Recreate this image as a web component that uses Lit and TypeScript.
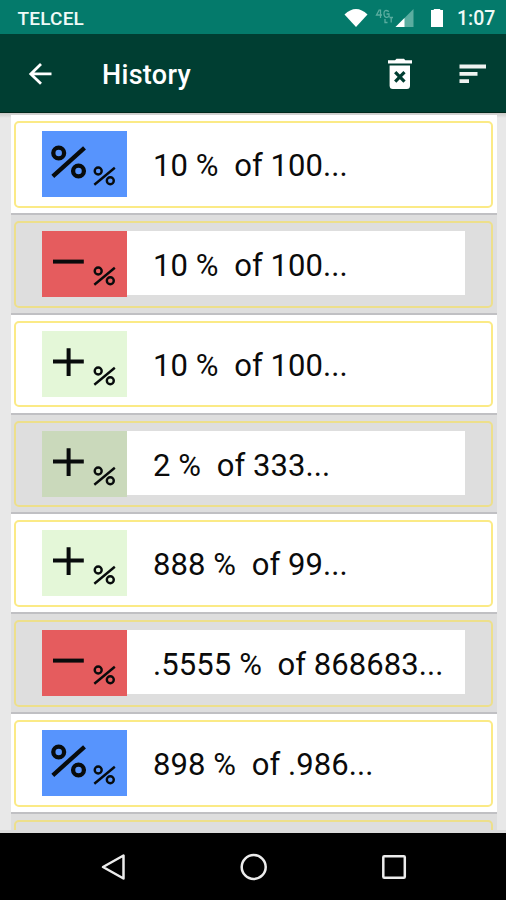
import { LitElement, html, svg, css } from "lit";
import { customElement, property } from "lit/decorators.js";
import { classMap } from "lit/directives/class-map.js";

type Kind = "percent" | "minus" | "plus";
interface Entry { kind: Kind; text: string; }

const ENTRIES: Entry[] = [
  { kind: "percent", text: "10 %  of 100..." },
  { kind: "minus", text: "10 %  of 100..." },
  { kind: "plus", text: "10 %  of 100..." },
  { kind: "plus", text: "2 %  of 333..." },
  { kind: "plus", text: "888 %  of 99..." },
  { kind: "minus", text: ".5555 %  of 868683..." },
  { kind: "percent", text: "898 %  of .986..." },
  { kind: "plus", text: "" },
];

@customElement("operation-tile")
class OperationTile extends LitElement {
  @property() kind: Kind = "percent";
  @property({ type: Boolean }) shaded = false;

  static styles = css`
    :host { display: block; flex: none; width: 85px; height: 66px; }
    .tile { display: block; width: 85px; height: 66px; fill: none; stroke: #080b0c; }
    .percent { background: #5794fd; }
    .minus { background: #e55c5e; }
    .plus { background: #e4f7d8; }
    .plus.shaded { background: #cad9bb; }
  `;

  private symbol() {
    if (this.kind === "percent") {
      return svg`<g stroke-width="4.3">
        <circle cx="16.7" cy="22" r="5.4"></circle>
        <circle cx="36.5" cy="40" r="5.4"></circle>
        <path d="M10.8 45.3 42.5 16.8"></path></g>`;
    }
    return svg`<path stroke-width="4" d=${this.kind === "plus"
      ? "M11 30.6H41.8M26.6 17.2V45" : "M11 30.6H41.8"}></path>`;
  }

  render() {
    return html`<svg viewBox="0 0 85 66" class=${classMap({ tile: true, [this.kind]: true, shaded: this.shaded })}>
      ${this.symbol()}
      <g stroke-width="2.4">
        <circle cx="56.2" cy="40" r="3.5"></circle>
        <circle cx="68.3" cy="49.7" r="3.5"></circle>
        <path d="M52.3 53.7 72.8 36.8"></path>
      </g>
    </svg>`;
  }
}

@customElement("app-root")
class AppRoot extends LitElement {
  static styles = css`
    :host {
      display: flex; flex-direction: column; width: 506px; height: 900px;
      overflow: hidden; font-family: Roboto, sans-serif; background: #e8e8e8;
    }
    .status {
      flex: none; height: 34px; box-sizing: border-box; padding: 2px 10px 0 17.5px;
      display: flex; align-items: center; background: #047a6b; color: #f0faf7;
      font-size: 19px; font-weight: 500;
    }
    .carrier { flex: 1; letter-spacing: 0.2px; }
    .status-icons { width: 106px; height: 32px; margin-right: 7px; }
    .clock { font-size: 19.5px; width: 39px; text-align: left; white-space: nowrap; }
    .bar {
      flex: none; height: 78.5px; box-sizing: border-box; display: flex; align-items: center;
      padding: 2px 16px 0 24px; background: #003e32; border-bottom: 1.5px solid #00291c; color: #fff;
    }
    .icon { display: block; width: 32px; height: 32px; flex: none; }
    .title { flex: 1; margin: 3px 0 0 46px; font-size: 27px; font-weight: 500; letter-spacing: 0.3px; }
    .trash { margin-right: 42px; }
    .list {
      flex: 1; min-height: 0; overflow: hidden; padding: 2.8px 9px 0 10.5px;
      background: linear-gradient(#c9c9c7, #e8e8e8 5px);
    }
    .row {
      height: 99.8px; box-sizing: border-box; display: flex; flex-direction: column;
      padding: 6px 4px 6px 3.5px; background: #fff; border-bottom: 2px solid #c0c0c3;
    }
    .row.shaded { background: #dedede; }
    .frame {
      flex: none; height: 86.5px; box-sizing: border-box; display: flex; align-items: flex-start;
      padding: 8px 26px 0 26.1px; border: 2px solid #fbea86; border-radius: 5px;
    }
    .shaded .frame { border-color: #eddf8b; }
    .label {
      flex: 1; height: 64px; line-height: 70px; padding-left: 26px; white-space: pre;
      font-size: 31px; letter-spacing: 0.08px; color: #0b0b0b; background: #fff;
    }
    .nav {
      flex: none; height: 70px; box-sizing: border-box; display: flex; justify-content: space-between;
      align-items: center; padding: 0 95px 0 96px; background: #000; border-top: 3px solid #dcdcdc;
    }
    .nav-icon { width: 34px; height: 34px; display: block; fill: none; stroke: #ececec; stroke-width: 2.5; }
  `;

  render() {
    return html`
      <div class="status">
        <span class="carrier">TELCEL</span>
        <svg class="status-icons" viewBox="0 0 106 32">
          <path fill="#fff" d="M0.5 12.5Q12 1.5 23.5 12.5L12 25Z"></path>
          <g fill="none" stroke="#5bada0" stroke-width="1.3">
            <path d="M35.5 7.5 32.5 13H38M36.5 7.5V16M45 9.5Q39.5 6.5 40 12.5Q41 17 45 14.5V12H42.5M41 17V20.5H43.5M45.5 15.5H49M47.2 15.5V20.5"></path>
          </g>
          <path fill="#5bada0" d="M69.5 7V25H51.5Z"></path>
          <path fill="#fff" d="M60.5 16V25H51.5Z"></path>
          <path fill="#fff" d="M87 9.5V8H89.8V7H96.2V8H99V25H87Z"></path>
        </svg>
        <span class="clock">1:07</span>
      </div>
      <div class="bar">
        <svg class="icon" viewBox="0 0 32 32" fill="none" stroke="#fff" stroke-width="2.8">
          <path d="M27.5 15.9H6.8M17 6 6.8 15.9 17 25.8"></path>
        </svg>
        <span class="title">History</span>
        <svg class="icon trash" viewBox="0 0 32 32" fill="#fff">
          <path d="M4 2.2H11L12.5 .8H20L21.3 2.2H28V5.6H4Z"></path>
          <path fill-rule="evenodd" d="M5.6 7.5H26V27.5Q26 31 22.8 31H8.8Q5.6 31 5.6 27.5Z"></path>
          <path d="M11.2 14.2 20.5 23.6M20.5 14.2 11.2 23.6" stroke="#003e32" stroke-width="3.2"></path>
        </svg>
        <svg class="icon" viewBox="0 0 32 32" fill="#eef3f1">
          <path d="M1.5 6.6H28V10.4H1.5ZM1.5 13.9H19.5V17.7H1.5ZM1.5 21.2H11V25H1.5Z"></path>
        </svg>
      </div>
      <div class="list">
        ${ENTRIES.map((entry, i) => {
          const shaded = i % 2 === 1;
          return html`<div class=${classMap({ row: true, shaded })}>
            <div class="frame">
              <operation-tile .kind=${entry.kind} .shaded=${shaded}></operation-tile>
              <span class="label">${entry.text}</span>
            </div>
          </div>`;
        })}
      </div>
      <div class="nav">
        <svg class="nav-icon" viewBox="0 0 34 34"><path stroke-linejoin="round" d="M27.5 5.5V28.5L7 17Z"></path></svg>
        <svg class="nav-icon" viewBox="0 0 34 34"><circle cx="16.7" cy="17" r="12"></circle></svg>
        <svg class="nav-icon" viewBox="0 0 34 34"><rect x="6.3" y="6.3" width="21.5" height="21.5" rx="1"></rect></svg>
      </div>`;
  }
}
